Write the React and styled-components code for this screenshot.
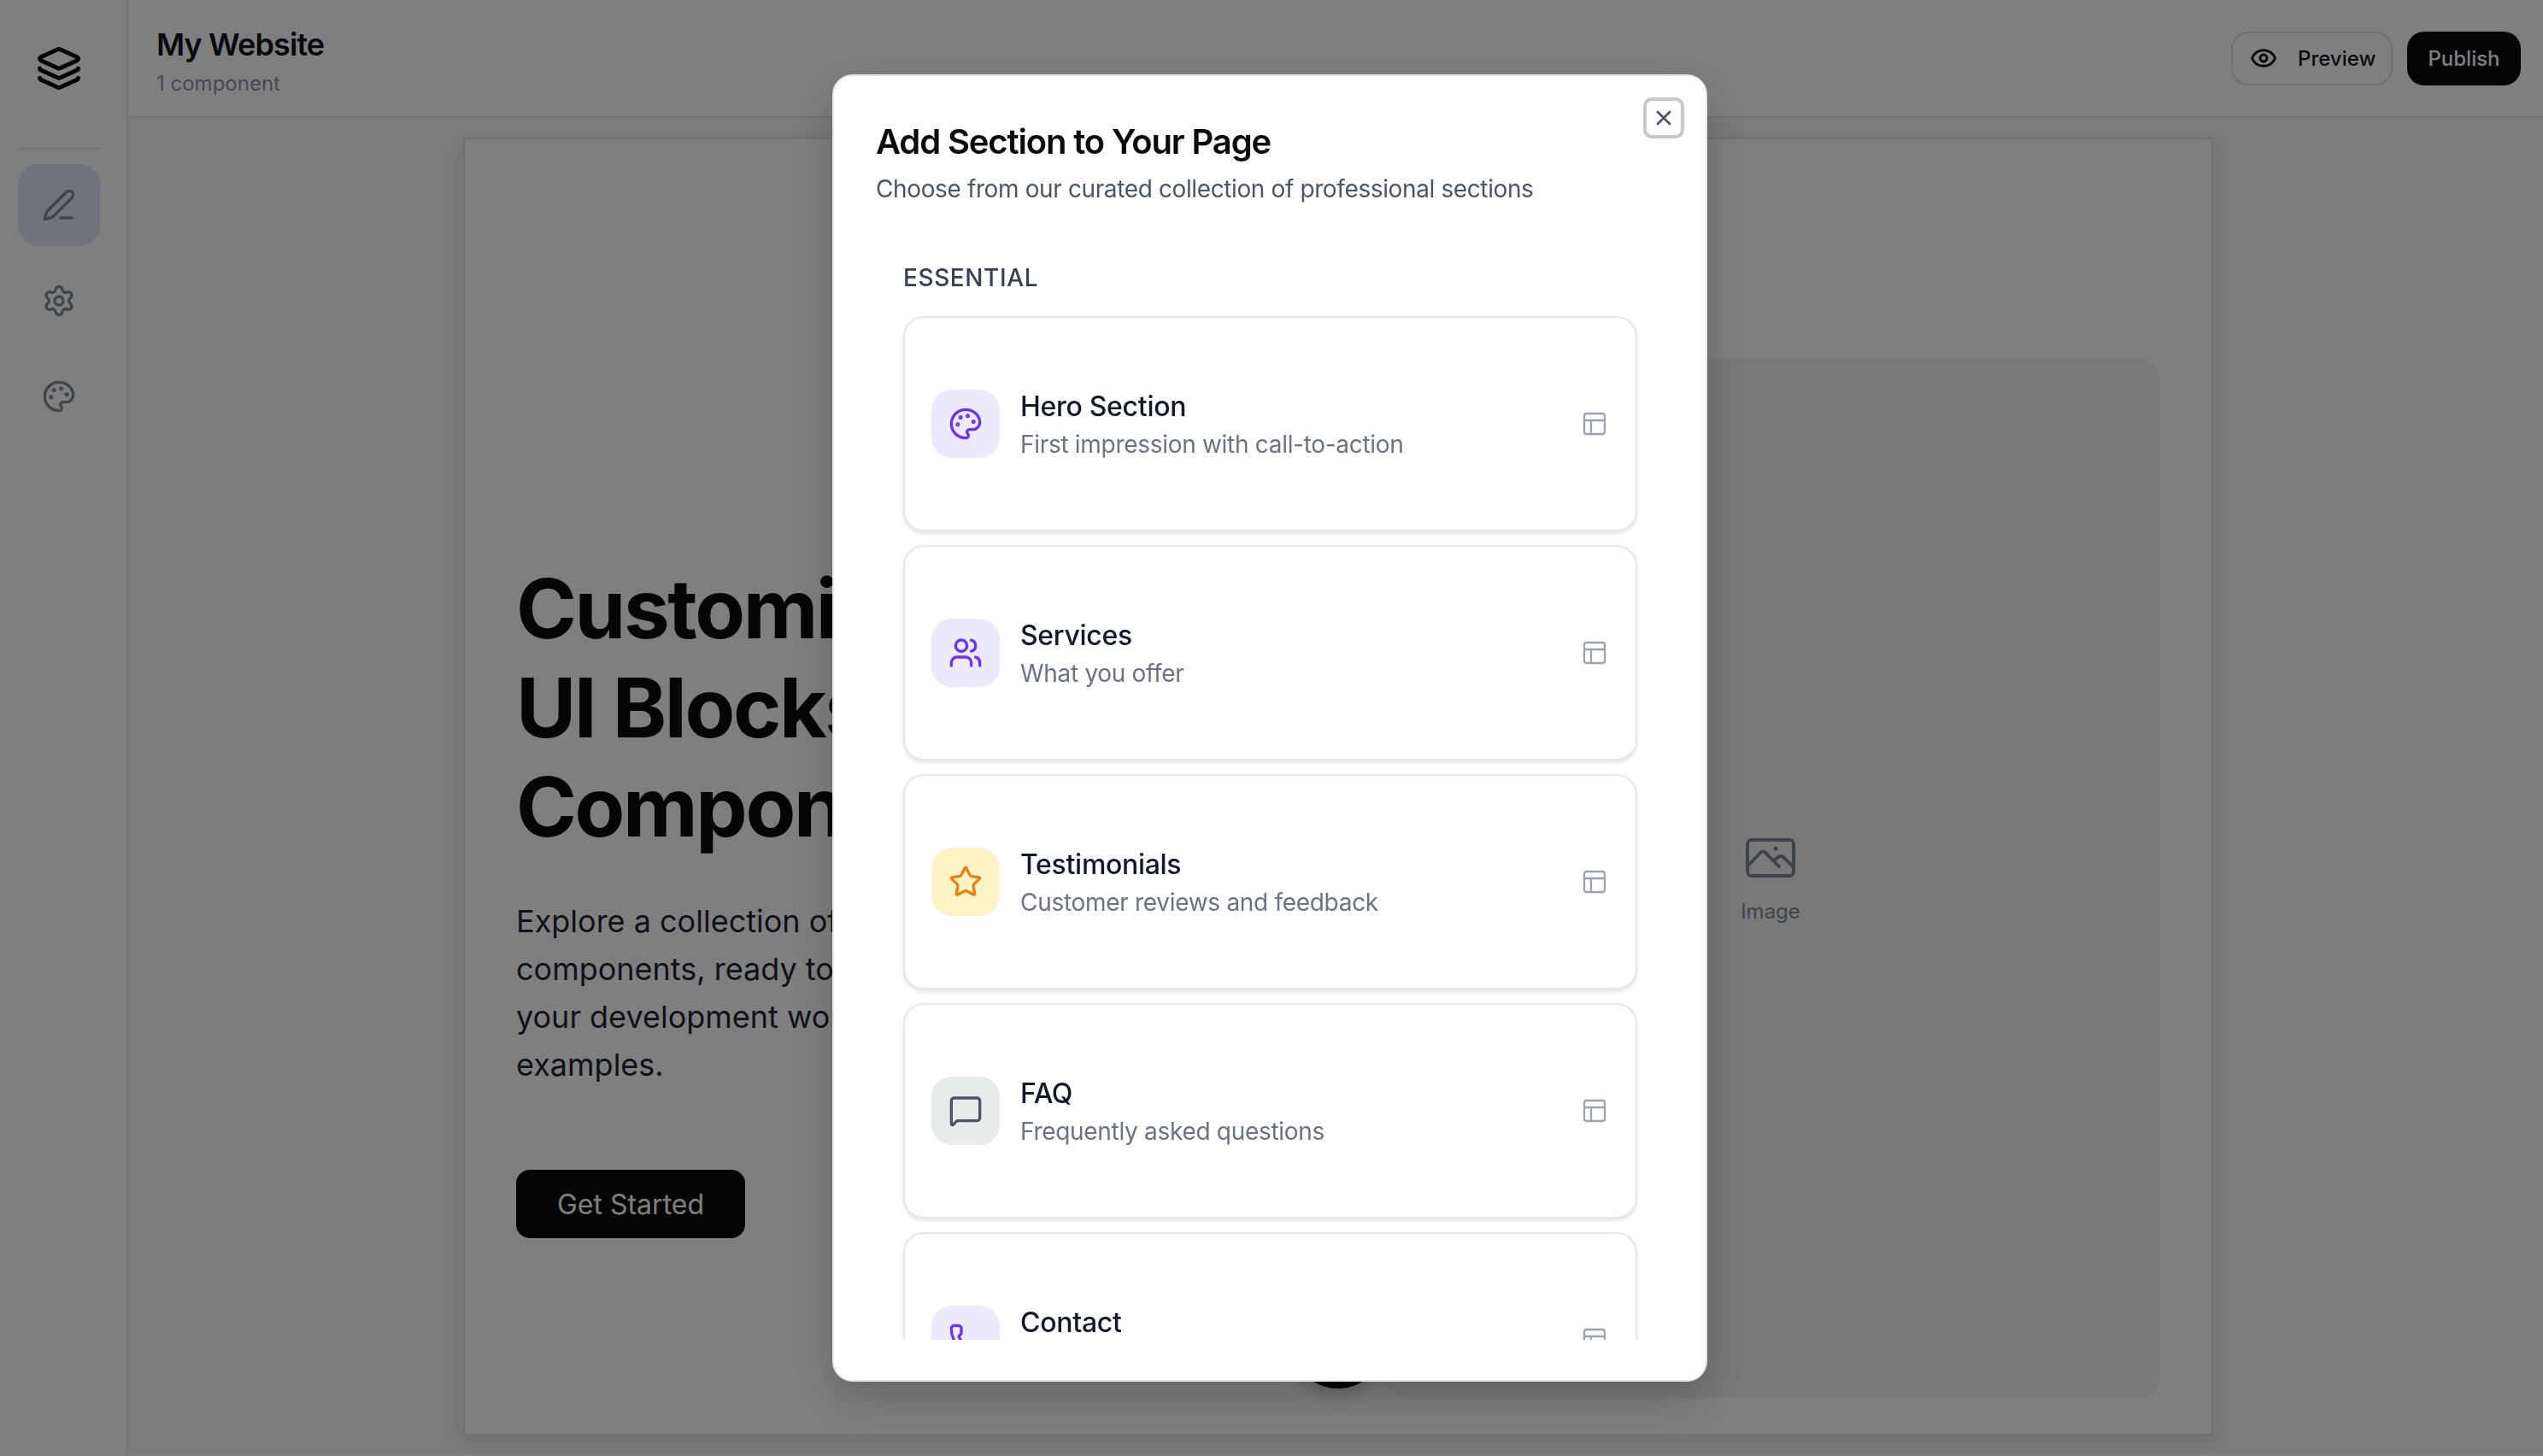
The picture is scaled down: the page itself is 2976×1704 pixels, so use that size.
import React from 'react'
import styled, { createGlobalStyle } from 'styled-components'
import {
  Layers, PenLine, Settings, Palette, Eye, X, Users, Star,
  MessageSquare, Phone, PanelsTopLeft,
} from 'lucide-react'

const GlobalStyle = createGlobalStyle`
  html, body { margin: 0; padding: 0; background: #fff; }
  body { font-family: Inter, "Noto Sans", sans-serif; overflow: hidden; }
  * { box-sizing: border-box; }
`

const sections = [
  { title: 'Hero Section', text: 'First impression with call-to-action', Icon: Palette, bg: '#ebebfd', fg: '#6b33f5' },
  { title: 'Services', text: 'What you offer', Icon: Users, bg: '#ebebfd', fg: '#6b33f5' },
  { title: 'Testimonials', text: 'Customer reviews and feedback', Icon: Star, bg: '#fef3c7', fg: '#e8800f' },
  { title: 'FAQ', text: 'Frequently asked questions', Icon: MessageSquare, bg: '#e7ebe9', fg: '#4b5563' },
  { title: 'Contact', text: 'Get in touch form', Icon: Phone, bg: '#ebebfd', fg: '#6b33f5' },
]

const ImageGlyph = () => (
  <svg width="58" height="46" viewBox="0 0 58 46" fill="none" stroke="currentColor" strokeWidth="4" strokeLinecap="round" strokeLinejoin="round">
    <rect x="2" y="2" width="54" height="42" rx="5" />
    <path d="M3 32 L17 17 Q20 14 23 17 L39 33" />
    <path d="M33 26 L38 22 Q41 20 44 22 L55 33" />
    <circle cx="35" cy="12" r="2.5" fill="currentColor" stroke="none" />
  </svg>
)

export default function App() {
  return (
    <Shell>
      <GlobalStyle />
      <Sidebar>
        <Logo><Layers size={54} strokeWidth={2.2} /></Logo>
        <Divider />
        <NavButton $active><PenLine size={40} strokeWidth={2} /></NavButton>
        <NavButton><Settings size={40} strokeWidth={2} /></NavButton>
        <NavButton><Palette size={40} strokeWidth={2} /></NavButton>
      </Sidebar>
      <Main>
        <Header>
          <SiteInfo>
            <SiteName>My Website</SiteName>
            <SiteMeta>1 component</SiteMeta>
          </SiteInfo>
          <HeaderActions>
            <PreviewButton><Eye size={32} strokeWidth={2.2} />Preview</PreviewButton>
            <PublishButton>Publish</PublishButton>
          </HeaderActions>
        </Header>
        <Canvas>
          <PageCard>
            <HeroText>
              <HeroTitle>Customizable<br />UI Blocks &amp;<br />Components</HeroTitle>
              <HeroLead>
                Explore a collection of modern, reusable<br />
                components, ready to drop into<br />
                your development workflow with live<br />
                examples.
              </HeroLead>
              <HeroButton>Get Started</HeroButton>
            </HeroText>
            <ImageBox>
              <ImageGlyph />
              <ImageLabel>Image</ImageLabel>
            </ImageBox>
            <AddButton />
          </PageCard>
        </Canvas>
      </Main>
      <Overlay />
      <Modal>
        <CloseButton><X size={28} strokeWidth={2.4} /></CloseButton>
        <ModalTitle>Add Section to Your Page</ModalTitle>
        <ModalText>Choose from our curated collection of professional sections</ModalText>
        <ScrollArea>
          <GroupLabel>ESSENTIAL</GroupLabel>
          <SectionList>
            {sections.map(({ title, text, Icon, bg, fg }) => (
              <SectionCard key={title}>
                <IconTile $bg={bg} $fg={fg}><Icon size={40} strokeWidth={2} /></IconTile>
                <SectionBody>
                  <SectionTitle>{title}</SectionTitle>
                  <SectionText>{text}</SectionText>
                </SectionBody>
                <TrailingIcon><PanelsTopLeft size={32} strokeWidth={1.7} /></TrailingIcon>
              </SectionCard>
            ))}
          </SectionList>
        </ScrollArea>
      </Modal>
    </Shell>
  )
}

const Shell = styled.div`
  display: flex;
  width: 100vw;
  height: calc(100vh - 2px);
  background: #f5f6f9;
  overflow: hidden;
`

const Sidebar = styled.aside`
  width: 150px;
  flex: none;
  background: #fff;
  border-right: 2px solid #e5e7eb;
  display: flex;
  flex-direction: column;
  align-items: center;
  gap: 16px;
  padding: 0 10px 0 0;
`

const Logo = styled.div`
  height: 173px;
  padding-bottom: 13px;
  margin-bottom: -16px;
  display: flex;
  align-items: center;
  color: #0a0a0a;
`

const Divider = styled.div`
  width: 96px;
  height: 2px;
  background: #e5e7eb;
  margin-bottom: 1px;
`

const NavButton = styled.div`
  width: 96px;
  height: 96px;
  flex: none;
  border-radius: 24px;
  display: flex;
  align-items: center;
  justify-content: center;
  color: #7f8a9a;
  background: ${p => (p.$active ? '#dfe8f8' : 'transparent')};
`

const Main = styled.div`
  flex: 1;
  min-width: 0;
  display: flex;
  flex-direction: column;
`

const Header = styled.header`
  height: 138px;
  flex: none;
  background: #fff;
  border-bottom: 2px solid #e5e7eb;
  display: flex;
  align-items: center;
  justify-content: space-between;
  padding: 0 26px 0 33px;
`

const SiteInfo = styled.div`
  padding-top: 6px;
`

const SiteName = styled.div`
  font-size: 36px;
  line-height: 48px;
  font-weight: 600;
  letter-spacing: -0.9px;
  color: #111318;
`

const SiteMeta = styled.div`
  font-size: 24px;
  line-height: 32px;
  margin-top: 6px;
  color: #8a93a3;
`

const HeaderActions = styled.div`
  display: flex;
  gap: 17px;
`

const PreviewButton = styled.div`
  height: 63px;
  width: 189px;
  border: 2px solid #dcdee2;
  border-radius: 20px;
  display: flex;
  align-items: center;
  gap: 24px;
  padding-left: 20px;
  font-size: 24px;
  font-weight: 500;
  color: #111318;
  background: #fff;
`

const PublishButton = styled.div`
  height: 63px;
  width: 133px;
  border-radius: 20px;
  background: #0a0a0a;
  color: #fff;
  font-size: 24px;
  font-weight: 500;
  display: flex;
  align-items: center;
  justify-content: center;
`

const Canvas = styled.main`
  flex: 1;
  min-height: 0;
  padding: 23px 386px 0 392px;
`

const PageCard = styled.div`
  position: relative;
  width: 2048px;
  height: 1519px;
  background: #fff;
  border: 2px solid #e2e3e6;
  box-shadow: 0 8px 24px rgba(0, 0, 0, 0.1);
  padding: 256px 60px 42px 60px;
  display: grid;
  grid-template-columns: 1fr 912px;
`

const HeroText = styled.div`
  padding-top: 235px;
  white-space: nowrap;
`

const HeroTitle = styled.h1`
  margin: 0;
  font-size: 96px;
  line-height: 116px;
  font-weight: 700;
  color: #0a0a0a;
  letter-spacing: -2.4px;
`

const HeroLead = styled.p`
  margin: 48px 0 95px;
  font-size: 36px;
  line-height: 56px;
  color: #1f2430;
`

const HeroButton = styled.div`
  width: 268px;
  height: 80px;
  border-radius: 16px;
  background: #0a0a0a;
  color: #fff;
  font-size: 32px;
  display: flex;
  align-items: center;
  justify-content: center;
`

const ImageBox = styled.div`
  background: #f2f2f3;
  border-radius: 26px;
  display: flex;
  flex-direction: column;
  align-items: center;
  justify-content: center;
  gap: 24px;
  padding-top: 8px;
  color: #7e8998;
`

const ImageLabel = styled.div`
  font-size: 24px;
  line-height: 32px;
`

const AddButton = styled.div`
  position: absolute;
  left: 966px;
  top: 1350px;
  width: 112px;
  height: 112px;
  border-radius: 50%;
  background: #0a0a0a;
  box-shadow: 0 8px 20px rgba(0, 0, 0, 0.2);
`

const Overlay = styled.div`
  position: fixed;
  inset: 0;
  background: rgba(0, 0, 0, 0.5);
`

const Modal = styled.div`
  position: fixed;
  left: 974px;
  top: 87px;
  width: 1024px;
  height: 1530px;
  background: #fff;
  border: 2px solid #e5e7eb;
  border-radius: 24px;
  box-shadow: 0 20px 50px rgba(0, 0, 0, 0.2);
  padding: 49px 48px 47px 49px;
  display: flex;
  flex-direction: column;
`

const CloseButton = styled.div`
  position: absolute;
  top: 25px;
  right: 25px;
  width: 48px;
  height: 48px;
  border-radius: 10px;
  border: 4px solid #c6c9cf;
  display: flex;
  align-items: center;
  justify-content: center;
  color: #4b5563;
`

const ModalTitle = styled.h2`
  margin: 0;
  font-size: 40px;
  line-height: 56px;
  font-weight: 600;
  letter-spacing: -1.15px;
  color: #0a0a0a;
`

const ModalText = styled.p`
  margin: 7px 0 0;
  font-size: 28px;
  line-height: 40px;
  letter-spacing: -0.38px;
  color: #4b5563;
`

const ScrollArea = styled.div`
  flex: 1;
  min-height: 0;
  overflow: hidden;
  margin-top: 40px;
  padding: 24px 32px 0;
`

const GroupLabel = styled.div`
  font-size: 28px;
  line-height: 40px;
  font-weight: 500;
  letter-spacing: 0.6px;
  color: #374151;
  margin-bottom: 25px;
`

const SectionList = styled.div`
  display: flex;
  flex-direction: column;
  gap: 16px;
`

const SectionCard = styled.div`
  height: 252px;
  flex: none;
  border: 2px solid #e5e7eb;
  border-radius: 24px;
  background: #fff;
  box-shadow: 0 3px 4px rgba(0, 0, 0, 0.1);
  display: flex;
  align-items: center;
  padding: 0 32px 0 31px;
  gap: 24px;
`

const IconTile = styled.div`
  width: 80px;
  height: 80px;
  flex: none;
  border-radius: 24px;
  background: ${p => p.$bg};
  color: ${p => p.$fg};
  display: flex;
  align-items: center;
  justify-content: center;
`

const SectionBody = styled.div`
  flex: 1;
  min-width: 0;
`

const SectionTitle = styled.div`
  font-size: 32px;
  line-height: 48px;
  font-weight: 500;
  letter-spacing: -0.3px;
  color: #111827;
`

const SectionText = styled.div`
  font-size: 28px;
  line-height: 40px;
  letter-spacing: -0.3px;
  color: #6b7280;
`

const TrailingIcon = styled.div`
  display: flex;
  color: #9ca3af;
`
